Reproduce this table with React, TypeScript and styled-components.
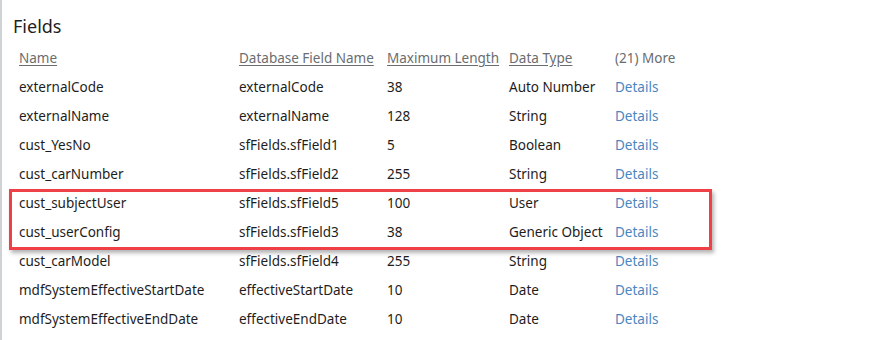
import styled, { createGlobalStyle } from 'styled-components';

interface Field {
    name: string;
    dbName: string;
    maxLength: number;
    dataType: string;
}

const fields: Field[] = [
    { name: 'externalCode', dbName: 'externalCode', maxLength: 38, dataType: 'Auto Number' },
    { name: 'externalName', dbName: 'externalName', maxLength: 128, dataType: 'String' },
    { name: 'cust_YesNo', dbName: 'sfFields.sfField1', maxLength: 5, dataType: 'Boolean' },
    { name: 'cust_carNumber', dbName: 'sfFields.sfField2', maxLength: 255, dataType: 'String' },
    { name: 'cust_subjectUser', dbName: 'sfFields.sfField5', maxLength: 100, dataType: 'User' },
    { name: 'cust_userConfig', dbName: 'sfFields.sfField3', maxLength: 38, dataType: 'Generic Object' },
    { name: 'cust_carModel', dbName: 'sfFields.sfField4', maxLength: 255, dataType: 'String' },
    { name: 'mdfSystemEffectiveStartDate', dbName: 'effectiveStartDate', maxLength: 10, dataType: 'Date' },
    { name: 'mdfSystemEffectiveEndDate', dbName: 'effectiveEndDate', maxLength: 10, dataType: 'Date' },
];

const headers = ['Name', 'Database Field Name', 'Maximum Length', 'Data Type'];

export default function App() {
    return (
        <>
            <GlobalStyle />
            <Page>
                <Title>Fields</Title>
                <TableWrap>
                    <Table>
                        <Row>
                            {headers.map((h) => (
                                <HeaderCell key={h}>{h}</HeaderCell>
                            ))}
                            <MoreCell>(21) More</MoreCell>
                        </Row>
                        {fields.map((f) => (
                            <Row key={f.name}>
                                <Cell>{f.name}</Cell>
                                <Cell>{f.dbName}</Cell>
                                <Cell>{f.maxLength}</Cell>
                                <Cell>{f.dataType}</Cell>
                                <LinkCell>Details</LinkCell>
                            </Row>
                        ))}
                    </Table>
                    <Highlight />
                </TableWrap>
            </Page>
        </>
    );
}

const GlobalStyle = createGlobalStyle`
    html, body {
        margin: 0;
        background: #fff;
    }
    body {
        font-family: 'Noto Sans', 'Open Sans', sans-serif;
        color: #1d1d1d;
    }
`;

const Page = styled.div`
    width: 873px;
    height: 340px;
    box-sizing: border-box;
    border-left: 2px solid #cfd2d4;
    padding: 14px 0 0 11px;
    overflow: hidden;
`;

const Title = styled.div`
    font-size: 18px;
    line-height: 24px;
    color: #1f1f1f;
`;

const TableWrap = styled.div`
    position: relative;
    margin-top: 6px;
`;

const Table = styled.div`
    display: grid;
    grid-template-columns: 220px 148px 122px 106px auto;
    padding-left: 6px;
`;

const Row = styled.div`
    display: contents;
`;

const Cell = styled.div`
    font-size: 13.5px;
    height: 29px;
    line-height: 29px;
    white-space: nowrap;
`;

const HeaderCell = styled(Cell)`
    color: #6a6d70;
    text-decoration: underline;
    text-underline-offset: 2px;
`;

const MoreCell = styled(Cell)`
    color: #6a6d70;
`;

const LinkCell = styled(Cell)`
    color: #4a86c2;
`;

const Highlight = styled.div`
    position: absolute;
    left: -4px;
    top: 145px;
    width: 697px;
    height: 55px;
    border: 3px solid #ef4048;
    box-shadow: 2px 3px 4px rgba(0, 0, 0, 0.3);
    pointer-events: none;
`;
